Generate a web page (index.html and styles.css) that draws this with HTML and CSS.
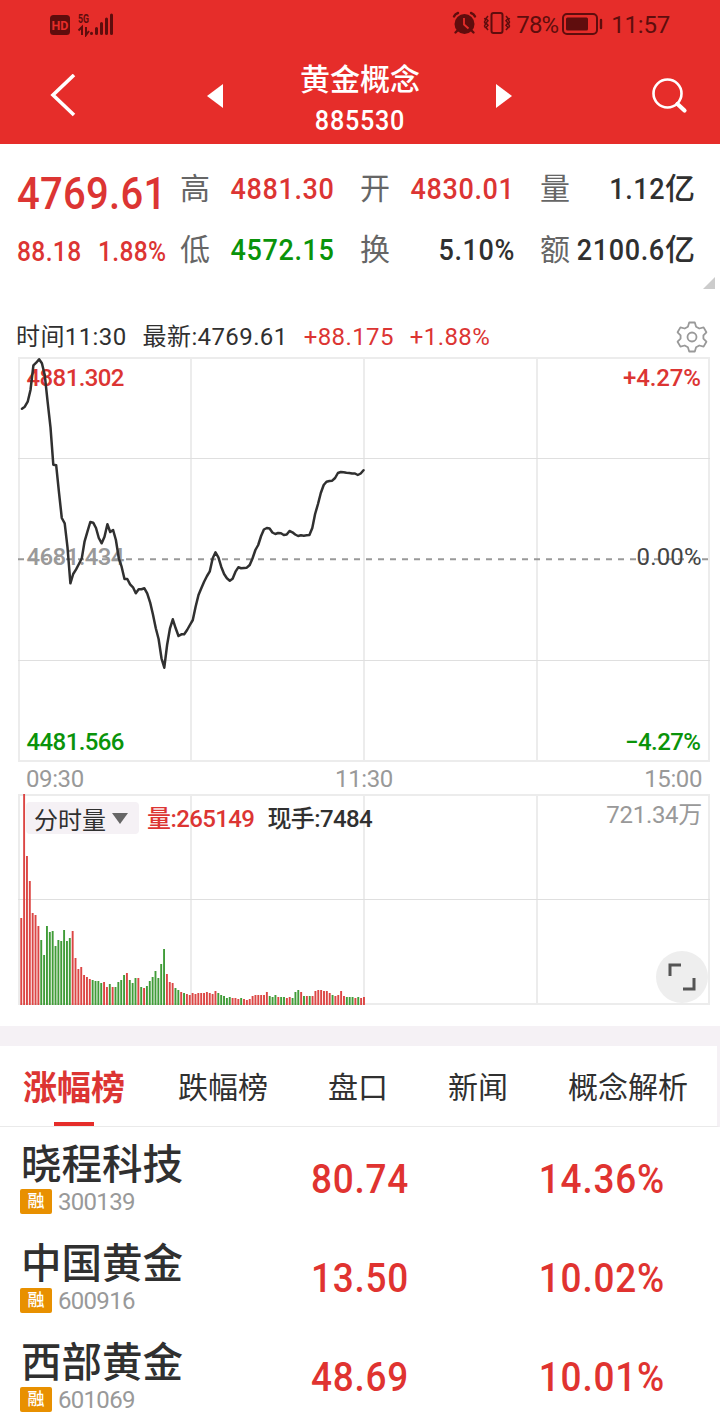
FILE: index.html
```html
<!DOCTYPE html>
<html lang="zh-CN">
<head>
    <meta charset="UTF-8">
    <meta name="viewport" content="width=device-width, initial-scale=1.0">
    <title>黄金概念 885530</title>
    <link rel="stylesheet" href="styles.css">
</head>
<body>
    <header class="header">
        <div class="status-bar">
            <svg class="status-left" width="70" height="26" viewBox="0 0 70 26">
                <rect x="2" y="4" width="20" height="20" rx="3.5" fill="#5f0d0d"/>
                <text x="12" y="18.5" class="hd-text">HD</text>
                <text x="30" y="11.5" class="net-text" textLength="11" lengthAdjust="spacingAndGlyphs">5G</text>
                <path d="M34 24V16L30.500 19.500M38 16V24L41 20" stroke="#5f0d0d" stroke-width="2" fill="none"/>
                <path d="M43.500 22.200v.3M48.500 17.500v5M53.500 12.500v10M58.500 8v14.500M63.500 4v18.500" stroke="#5f0d0d" stroke-width="3" stroke-linecap="round"/>
            </svg>
            <div class="status-right">
                <svg width="60" height="26" viewBox="450 12 60 26">
                    <circle cx="462.500" cy="25" r="10" fill="#5f0d0d"/>
                    <path d="M452 17.500q1-2.500 4-3.500M473 17.500q-1-2.500-4-3.500M455.500 31.500l-2 2M469.500 31.500l2 2" stroke="#5f0d0d" stroke-width="2.400" stroke-linecap="round" fill="none"/>
                    <path d="M462 19v6.500l4.500 4" stroke="#e62d2a" stroke-width="1.800" fill="none"/>
                    <rect x="489.500" y="14" width="11" height="20" rx="2" fill="none" stroke="#5f0d0d" stroke-width="2"/>
                    <path d="M486 17l-2 2.500 2 2.200-2 2.300 2 2.300-2 2.200 2 2.500M482.500 19l1 2-1 2 1 2-1 2 1 2M504 17l2 2.500-2 2.200 2 2.300-2 2.300 2 2.200-2 2.500M507.500 19l-1 2 1 2-1 2 1 2-1 2" stroke="#5f0d0d" stroke-width="1.500" fill="none"/>
                </svg>
                <span class="battery-text">78%</span>
                <svg width="42" height="24" viewBox="0 0 42 24">
                    <rect x="2" y="2" width="34" height="20" rx="4" fill="none" stroke="#5f0d0d" stroke-width="2"/>
                    <rect x="5" y="5.500" width="22" height="13" rx="1.500" fill="#5f0d0d"/>
                    <path d="M40 8v8" stroke="#5f0d0d" stroke-width="2.400" stroke-linecap="round"/>
                </svg>
                <span class="clock">11:57</span>
            </div>
        </div>
        <div class="nav-bar">
            <svg class="back-icon" width="28" height="44" viewBox="0 0 28 44">
                <path d="M24 1L3 21L24 41" fill="none" stroke="#fff" stroke-width="3.600"/>
            </svg>
            <svg class="prev-icon" width="16" height="24" viewBox="0 0 16 24"><path d="M16 0v24L0 12z" fill="#fff"/></svg>
            <div class="title">
                <div class="title-name">黄金概念</div>
                <div class="title-code">885530</div>
            </div>
            <svg class="next-icon" width="16" height="24" viewBox="0 0 16 24"><path d="M0 0v24l16-12z" fill="#fff"/></svg>
            <svg class="search-icon" width="38" height="38" viewBox="0 0 38 38">
                <circle cx="16.500" cy="16.500" r="14" fill="none" stroke="#fff" stroke-width="2.600"/>
                <path d="M26.500 27l7 6.500" stroke="#fff" stroke-width="4.200" stroke-linecap="round"/>
            </svg>
        </div>
    </header>

    <!-- 行情数据 -->
    <section class="quote">
        <div class="price red">4769.61</div>
        <div class="cell"><span class="label">高</span><span class="value red"><span class="num">4881.30</span></span></div>
        <div class="cell"><span class="label">开</span><span class="value red"><span class="num">4830.01</span></span></div>
        <div class="cell"><span class="label">量</span><span class="value"><span class="num">1.12</span>亿</span></div>
        <div class="change red"><span>88.18</span><span>1.88%</span></div>
        <div class="cell"><span class="label">低</span><span class="value green"><span class="num">4572.15</span></span></div>
        <div class="cell"><span class="label">换</span><span class="value"><span class="num">5.10%</span></span></div>
        <div class="cell"><span class="label">额</span><span class="value"><span class="num">2100.6</span>亿</span></div>
        <span class="corner"></span>
    </section>

    <!-- 分时信息 -->
    <div class="info-bar">
        <span class="info-time">时间11:30</span>
        <span class="info-last">最新:4769.61</span>
        <span class="info-diff red">+88.175</span>
        <span class="info-rate red">+1.88%</span>
        <svg class="gear" width="32" height="32" viewBox="-16 -16 32 32">
            <path d="M-2.800-14.500h5.600l1.300 4.200 3.200 1.800 4.300-1.100 2.800 4.900-3 3.100v3.200l3 3.100-2.800 4.900-4.300-1.100-3.200 1.800-1.300 4.200h-5.600l-1.300-4.200-3.200-1.800-4.300 1.100-2.800-4.900 3-3.100v-3.200l-3-3.100 2.800-4.900 4.300 1.100 3.200-1.800z" fill="none" stroke="#999" stroke-width="1.800" stroke-linejoin="round"/>
            <circle r="4.500" fill="none" stroke="#999" stroke-width="1.800"/>
        </svg>
    </div>

    <!-- 分时图 -->
    <svg class="price-chart" width="720" height="412" viewBox="0 354 720 412">
        <path class="frame" d="M18 358H710M18 761H710M19 358V762M191 358V762M364 358V762M537 358V762M709 358V762"/>
        <path class="grid-line" d="M18 458.500H710M18 660.500H710"/>
        <path class="base-line" d="M18 559.300H709"/>
        <text class="tick red" x="26.500" y="386" textLength="98">4881.302</text>
        <text class="tick grey" x="26.500" y="565" textLength="98">4681.434</text>
        <text class="tick green" x="26.500" y="750" textLength="98">4481.566</text>
        <text class="tick red" x="623" y="386" textLength="78">+4.27%</text>
        <text class="tick rate-zero" x="636.500" y="565" textLength="65">0.00%</text>
        <text class="tick green" x="625" y="750" textLength="76">−4.27%</text>
        <polyline id="priceLine" class="price-line"/>
    </svg>
    <div class="time-axis">
        <span>09:30</span><span>11:30</span><span>15:00</span>
    </div>

    <!-- 成交量 -->
    <div class="volume">
        <svg width="720" height="215" viewBox="0 792 720 215">
            <path class="frame" d="M18 795H710M18 1004H710M19 795V1004M191 795V1004M364 795V1004M537 795V1004M709 795V1004"/>
            <path class="grid-line" d="M18 899.500H710"/>
            <g id="volumeBars"></g>
        </svg>
        <div class="volume-head">
            <button class="indicator">分时量<i class="arrow"></i></button>
            <span class="volume-total red">量:265149</span>
            <span class="volume-now">现手:7484</span>
            <span class="volume-max">721.34万</span>
        </div>
        <button class="fullscreen">
            <svg width="28" height="28" viewBox="0 0 28 28">
                <path d="M2 13V2H13M26 15V26H15" fill="none" stroke="#555" stroke-width="3"/>
            </svg>
        </button>
    </div>

    <nav class="tabs">
        <a class="tab active">涨幅榜</a>
        <a class="tab">跌幅榜</a>
        <a class="tab">盘口</a>
        <a class="tab">新闻</a>
        <a class="tab">概念解析</a>
    </nav>

    <ul class="stocks">
        <li class="stock">
            <div>
                <div class="stock-name">晓程科技</div>
                <div class="stock-sub"><span class="tag">融</span><span class="code">300139</span></div>
            </div>
            <span class="stock-price">80.74</span>
            <span class="stock-rate">14.36%</span>
        </li>
        <li class="stock">
            <div>
                <div class="stock-name">中国黄金</div>
                <div class="stock-sub"><span class="tag">融</span><span class="code">600916</span></div>
            </div>
            <span class="stock-price">13.50</span>
            <span class="stock-rate">10.02%</span>
        </li>
        <li class="stock">
            <div>
                <div class="stock-name">西部黄金</div>
                <div class="stock-sub"><span class="tag">融</span><span class="code">601069</span></div>
            </div>
            <span class="stock-price">48.69</span>
            <span class="stock-rate">10.01%</span>
        </li>
    </ul>

    <script src="chart.js"></script>
</body>
</html>
```
FILE: styles.css
```css
* {
    box-sizing: border-box;
}

body {
    margin: 0;
    width: 720px;
    height: 1412px;
    overflow: hidden;
    background: #fff;
    color: #303030;
    font-family: Roboto, "Noto Sans CJK SC", sans-serif;
}

button {
    border: none;
    padding: 0;
    font-family: inherit;
    color: inherit;
}

svg {
    display: block;
}

.red {
    color: #dc3533;
    fill: #dc3533;
}

.green {
    color: #0a930a;
    fill: #0a930a;
}

.grey {
    fill: #999;
}

/* 顶部 */
.header {
    height: 144px;
    background: #e62d2a;
    color: #fff;
}

.status-bar {
    height: 48px;
    padding: 0 50px 0 48px;
    display: flex;
    justify-content: space-between;
    align-items: center;
    color: #5f0d0d;
}

.status-right {
    display: flex;
    align-items: center;
}

.hd-text {
    font-size: 12.5px;
    font-weight: 700;
    fill: #e62d2a;
    text-anchor: middle;
}

.net-text {
    font-size: 12.5px;
    font-weight: 700;
    fill: #5f0d0d;
}

.battery-text {
    margin: 2px 3px 0 4px;
    font-size: 24px;
    letter-spacing: -0.9px;
}

.clock {
    margin: 2px 0 0 8px;
    font-size: 24px;
    letter-spacing: -0.2px;
}

.nav-bar {
    height: 96px;
    display: grid;
    grid-template-columns: 207px 17px 272px 155px 1fr;
    align-items: center;
}

.back-icon {
    margin-left: 50px;
}

.title {
    text-align: center;
}

.title-name {
    margin-top: 2px;
    height: 48px;
    line-height: 60px;
    font-size: 30px;
    font-weight: 500;
}

.title-code {
    height: 46px;
    line-height: 32px;
    padding-top: 7px;
    font-size: 28px;
    font-weight: 500;
    letter-spacing: 0.8px;
    transform: scaleX(0.9);
}

/* 行情数据 */
.quote {
    position: relative;
    height: 162px;
    padding: 14px 25px 0 17px;
    display: grid;
    grid-template-columns: 163px 180px 180px 155px;
    grid-template-rows: 61px 61px;
    align-items: center;
}

.price {
    font-size: 45px;
    font-weight: 500;
    letter-spacing: 0.3px;
    line-height: 60px;
    padding-top: 10px;
    transform: scaleX(0.89);
    transform-origin: left;
}

.change {
    display: flex;
    gap: 18px;
    padding-top: 4px;
    font-size: 27px;
    font-weight: 500;
    letter-spacing: 0.4px;
    transform: scaleX(0.91);
    transform-origin: left;
}

.cell {
    width: 155px;
    display: flex;
    justify-content: space-between;
    align-items: center;
    line-height: 60px;
    white-space: nowrap;
}

.label {
    width: 30px;
    font-size: 30px;
    color: #666;
}

.value {
    font-size: 30px;
    font-weight: 500;
    margin-left: -20px;
}

/* 数字收窄 */
.num {
    display: inline-block;
    letter-spacing: 0.7px;
    transform: scaleX(0.9);
    transform-origin: right;
}

.corner {
    position: absolute;
    right: 5px;
    bottom: 17px;
    border-left: 12px solid transparent;
    border-bottom: 12px solid #ccc;
}

/* 分时信息 */
.info-bar {
    height: 48px;
    padding: 14px 12px 0 16px;
    display: flex;
    align-items: center;
    line-height: 34px;
    font-size: 24px;
    letter-spacing: 0.4px;
}

.info-last,
.info-diff,
.info-rate {
    margin-left: 16px;
}

.gear {
    margin-left: auto;
}

/* 图表 */
.frame {
    stroke: #ececec;
    stroke-width: 2;
    fill: none;
}

.grid-line {
    stroke: #dfdfdf;
    stroke-width: 1;
}

.base-line {
    stroke: #999;
    stroke-width: 2;
    stroke-dasharray: 6 6;
}

.tick {
    font-size: 24px;
    font-weight: 500;
}

.rate-zero {
    fill: #444;
    font-weight: 400;
}

.price-line {
    fill: none;
    stroke: #303030;
    stroke-width: 2.5;
    stroke-linejoin: round;
    stroke-linecap: round;
}

.time-axis {
    height: 26px;
    padding: 0 18px 0 26px;
    display: flex;
    justify-content: space-between;
    line-height: 26px;
    font-size: 24px;
    letter-spacing: -0.4px;
    color: #999;
}

.volume {
    position: relative;
    height: 234px;
}

.bar-up {
    fill: #dc4644;
}

.bar-down {
    fill: #409c38;
}

.volume-head {
    position: absolute;
    top: 10px;
    left: 26px;
    right: 18px;
    height: 32px;
    display: flex;
    align-items: center;
    font-size: 24px;
    font-weight: 500;
    line-height: 32px;
}

.indicator {
    width: 113px;
    height: 32px;
    padding-left: 8px;
    display: flex;
    align-items: center;
    background: #f5f1f5;
    border-radius: 4px;
    font-size: 24px;
}

.arrow {
    margin-left: 6px;
    border: 8px solid transparent;
    border-top: 11px solid #666;
    border-bottom: 0;
}

.volume-total {
    margin: 2px 0 0 8px;
    letter-spacing: -0.6px;
}

.volume-now {
    margin: 2px 0 0 13px;
    letter-spacing: -0.6px;
}

.volume-max {
    margin: -7px 0 0 auto;
    font-weight: 400;
    letter-spacing: -0.3px;
    color: #999;
}

.fullscreen {
    position: absolute;
    left: 656px;
    top: 159px;
    width: 52px;
    height: 52px;
    border-radius: 50%;
    background: #eee;
    display: flex;
    align-items: center;
    justify-content: center;
}

/* 标签栏 */
.tabs {
    height: 101px;
    padding-left: 23px;
    display: flex;
    gap: 60px;
    border-top: 20px solid #f5f1f5;
    border-right: 3px solid #f5f1f5;
    border-bottom: 1px solid #eaeaea;
    line-height: 84px;
    font-size: 30px;
}

.tab {
    height: 80px;
}

.active {
    margin-right: -7px;
    color: #dc3533;
    font-size: 34px;
    font-weight: 700;
}

.active::after {
    content: "";
    display: block;
    width: 40px;
    height: 4px;
    margin: -8px auto 0;
    background: #e62d2a;
}

/* 股票列表 */
.stocks {
    margin: 0;
    padding: 0;
    list-style: none;
}

.stock {
    height: 99px;
    padding-left: 20px;
    display: grid;
    grid-template-columns: 240px 200px 205px;
    align-items: center;
}

.stock-name {
    height: 62px;
    padding-left: 1px;
    line-height: 77px;
    font-size: 40.5px;
    font-weight: 500;
}

.stock-sub {
    height: 37px;
    display: flex;
    align-items: flex-start;
}

.tag {
    width: 32px;
    height: 25px;
    line-height: 25px;
    border-radius: 2px;
    background: #e89000;
    color: #fff;
    font-size: 17px;
    font-weight: 500;
    text-align: center;
}

.code {
    height: 22px;
    margin: 2px 0 0 6px;
    font-size: 24px;
    line-height: 22px;
    letter-spacing: -0.7px;
    color: #999;
}

.stock-price,
.stock-rate {
    padding-top: 5px;
    font-size: 41px;
    font-weight: 500;
    letter-spacing: 0.9px;
    color: #e03330;
    text-align: center;
    transform: scaleX(0.9);
}

.stock-rate {
    text-align: right;
    transform-origin: right;
}
```
FILE: chart.js
```js
const START_X = 22;
const STEP = 2.846;
const BASE_Y = 1005;

// 每分钟价格
const prices = [
    408.7, 406.7, 401.7, 390, 365.3, 362.7, 359.3, 363.3, 375.3, 401.7,
    427.3, 464.7, 465.3, 492.7, 518, 523.3, 547.3, 583.3, 574, 569.3,
    564, 558.3, 541.3, 531.3, 522, 522.7, 528, 538, 543.3, 536.7,
    524.3, 532, 530, 540, 558.3, 566.7, 579, 579, 584.3, 587.3,
    593.3, 589.3, 589.3, 588.3, 593.3, 602.3, 614.3, 628.3, 639, 658.3,
    667.7, 645, 628.3, 619.3, 628.3, 636, 634.3, 634.3, 630, 625,
    620, 606.7, 595, 588.3, 581.7, 576, 571.3, 558.3, 552.3, 557.3,
    566.7, 574, 578.3, 580.7, 578.7, 571.7, 567.3, 568.3, 568, 567.7,
    565, 558.5, 550, 545, 536, 529.5, 528, 528.5, 532.5, 534,
    533, 533.3, 535, 534.5, 531, 532.3, 534.5, 536, 535.3, 535.7,
    535.3, 535, 528, 514, 504, 493, 485, 481.7, 481, 480.7,
    478, 473, 472, 472.3, 472.8, 473, 473.5, 473.5, 475, 473.5, 470.3
];

// 每分钟成交量，负数为绿色
const volumes = [
    87, 211, 149, 124, 92, 90, 79, -65, -50, -79, -73, -74, -59, -65, -64, -75, -64, -67, 74, 47,
    36, 38, 30, 28, 26, -25, -24, -24, -22, 23, 18, -21, 18, -18, -23, -25, -30, 32, -25, -22,
    -27, 27, -18, 17, -19, -24, -28, -34, -27, -41, -56, 31, 23, 22, -17, -15, 13, -12, 11, 10,
    12, 11, 12, 12, 12, 13, 12, 11, 14, -12, -10, -9, -7, -8, 7, 7, 6, -7, 6, 5,
    6, 9, 10, 10, 10, 10, 13, -9, -8, -10, 8, -8, -8, 7, 8, -7, -13, -15, 13, -9,
    9, -9, 9, 14, 15, 15, 14, 14, 12, -10, 9, 10, 14, 9, -8, -8, -8, 7, -8, 7, 8
];

document.getElementById('priceLine').setAttribute('points',
    prices.map((y, i) => `${(START_X + i * STEP).toFixed(1)},${y}`).join(' '));

document.getElementById('volumeBars').innerHTML = volumes.map((v, i) => {
    const h = Math.abs(v);
    const x = (START_X - 1.7 + i * 2.856).toFixed(2);
    return `<rect class="${v > 0 ? 'bar-up' : 'bar-down'}" x="${x}" y="${BASE_Y - h}" width="1.9" height="${h}"/>`;
}).join('');
```
